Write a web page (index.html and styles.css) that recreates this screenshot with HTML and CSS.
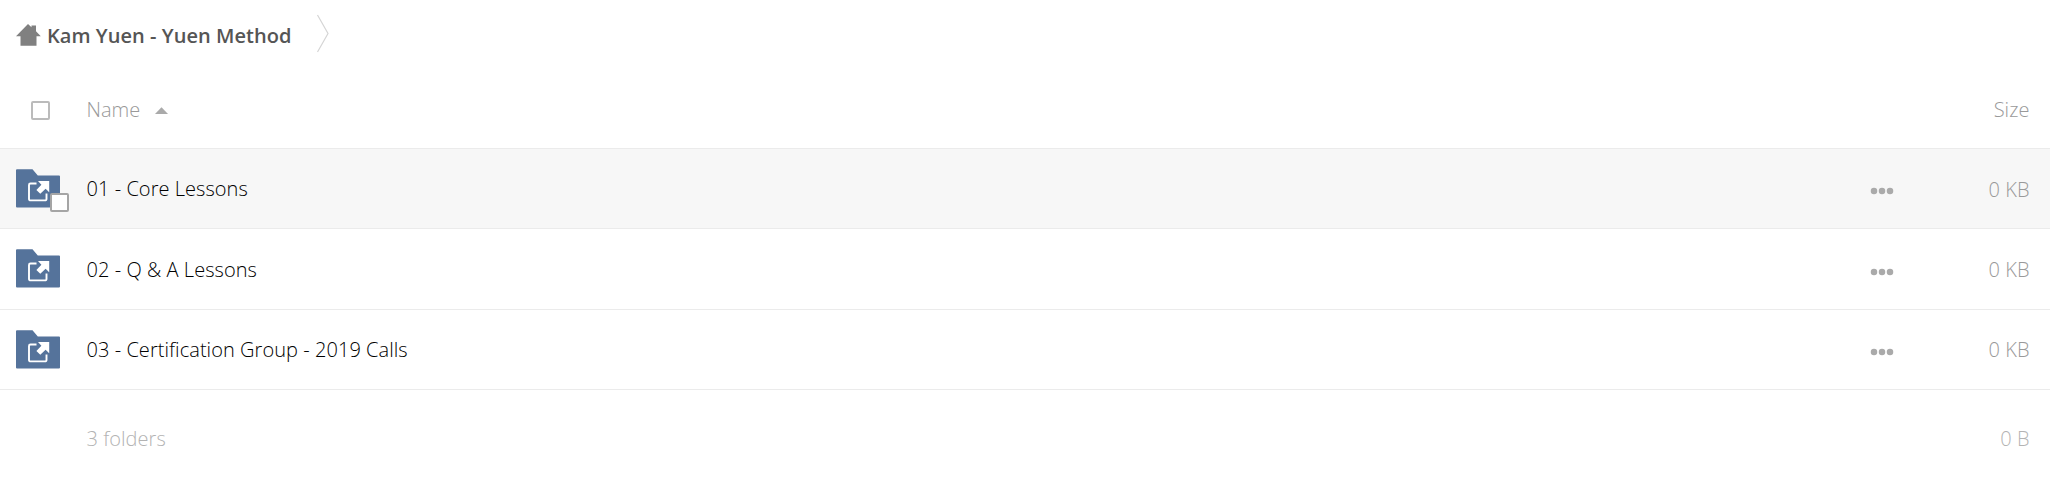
FILE: index.html
```html
<!DOCTYPE html>
<html lang="en">
<head>
    <meta charset="UTF-8">
    <meta name="viewport" content="width=device-width, initial-scale=1.0">
    <title>Files</title>
    <link rel="stylesheet" href="styles.css">
</head>
<body>
    <!-- shared icons -->
    <svg class="icon-defs" width="0" height="0">
        <symbol id="icon-folder" viewBox="0 0 44 39">
            <path fill="#55739b" d="M1 0.2h15.500l5.300 6.300H43a1 1 0 0 1 1 1V37.500a1 1 0 0 1-1 1H1a1 1 0 0 1-1-1V1.200a1 1 0 0 1 1-1z"/>
            <path fill="none" stroke="#fff" stroke-width="1.900" d="M20.500 14.500h-6a1.500 1.500 0 0 0-1.500 1.500v13.900a1.500 1.500 0 0 0 1.500 1.500h14.500a1.500 1.500 0 0 0 1.500-1.500V24.500"/>
            <path fill="#fff" d="M22 12H33.200v11.200l-3.600-3.400-5.300 5-3.900-3.900 5-5.200z"/>
        </symbol>
        <symbol id="icon-more" viewBox="0 0 24 8">
            <circle cx="4" cy="4" r="3.250"/>
            <circle cx="12" cy="4" r="3.250"/>
            <circle cx="20" cy="4" r="3.250"/>
        </symbol>
    </svg>

    <nav class="breadcrumb">
        <svg class="home-icon" width="26" height="24" viewBox="0 0 26 24">
            <path fill="#808080" d="M12 1l3.500 3.200V2.500h4.500V8.300l4.800 4.900H20.500V22.800H4.500V13.200H0z"/>
        </svg>
        <span class="crumb">Kam Yuen - Yuen Method</span>
        <svg class="separator" width="14" height="40" viewBox="0 0 14 40">
            <path fill="none" stroke="#d5d5d5" stroke-width="1.200" d="M1.500 1L12 19.500 1.500 38"/>
        </svg>
    </nav>

    <div class="file-list">
        <div class="list-header">
            <span class="select-cell"><span class="checkbox"></span></span>
            <span class="name">Name
                <svg class="sort-icon" width="13" height="7" viewBox="0 0 13 7"><path fill="#aaa" d="M6.500 0.300L13 7H0z"/></svg>
            </span>
            <span></span>
            <span class="size">Size</span>
        </div>
        <div class="row active">
            <span class="folder">
                <svg width="44" height="39"><use href="#icon-folder"/></svg>
                <span class="checkbox overlay"></span>
            </span>
            <span class="name">01 - Core Lessons</span>
            <svg class="more" width="24" height="8"><use href="#icon-more"/></svg>
            <span class="size">0 KB</span>
        </div>
        <div class="row">
            <span class="folder"><svg width="44" height="39"><use href="#icon-folder"/></svg></span>
            <span class="name">02 - Q &amp; A Lessons</span>
            <svg class="more" width="24" height="8"><use href="#icon-more"/></svg>
            <span class="size">0 KB</span>
        </div>
        <div class="row">
            <span class="folder"><svg width="44" height="39"><use href="#icon-folder"/></svg></span>
            <span class="name">03 - Certification Group - 2019 Calls</span>
            <svg class="more" width="24" height="8"><use href="#icon-more"/></svg>
            <span class="size">0 KB</span>
        </div>
        <div class="summary">
            <span></span>
            <span class="name">3 folders</span>
            <span></span>
            <span class="size">0 B</span>
        </div>
    </div>
</body>
</html>
```

FILE: styles.css
```css
body {
    margin: 0;
    background-color: #fff;
    font-family: "Open Sans", sans-serif;
    font-size: 20px;
    font-weight: 300;
    line-height: 28px;
    letter-spacing: 0.05px;
    color: #000;
}
.icon-defs {
    display: block;
}
.breadcrumb {
    display: flex;
    align-items: center;
    box-sizing: border-box;
    height: 72px;
    padding: 0 16px 2px;
}
.crumb {
    margin-left: 5px;
    padding-top: 2px;
    font-weight: 600;
    color: #555;
}
.separator {
    margin-left: 24px;
    margin-bottom: 2px;
}
.list-header,
.row,
.summary {
    display: grid;
    grid-template-columns: 70.5px 1fr 24px 136px;
    align-items: center;
    box-sizing: border-box;
    padding: 0 20.5px 0 16px;
}
.list-header {
    height: 77px;
    border-bottom: 1px solid #ebebeb;
    color: #999;
}
.row {
    height: 80.33px;
    border-bottom: 1px solid #ebebeb;
}
.row .name {
    padding-top: 1.5px;
}
.row .size {
    padding-top: 2px;
}
.row.active {
    background-color: #f7f7f7;
}
.row.active .name {
    padding-top: 1px;
}
.summary {
    height: 98px;
    color: #b3b3b3;
}
.select-cell {
    padding-left: 15px;
}
.checkbox {
    display: block;
    box-sizing: border-box;
    width: 19px;
    height: 19px;
    border: 2px solid #bbb;
    border-radius: 2px;
    background-color: #fff;
}
.folder {
    position: relative;
    width: 44px;
    height: 39px;
}
.folder svg {
    display: block;
}
.checkbox.overlay {
    position: absolute;
    left: 34px;
    top: 24px;
    border-color: #a5a5a5;
}
.sort-icon {
    margin-left: 9px;
    vertical-align: 3px;
}
.more {
    fill: #aaa;
    margin-top: 5.5px;
}
.size {
    text-align: right;
    color: #999;
}
.summary .size {
    color: #b3b3b3;
}
```
